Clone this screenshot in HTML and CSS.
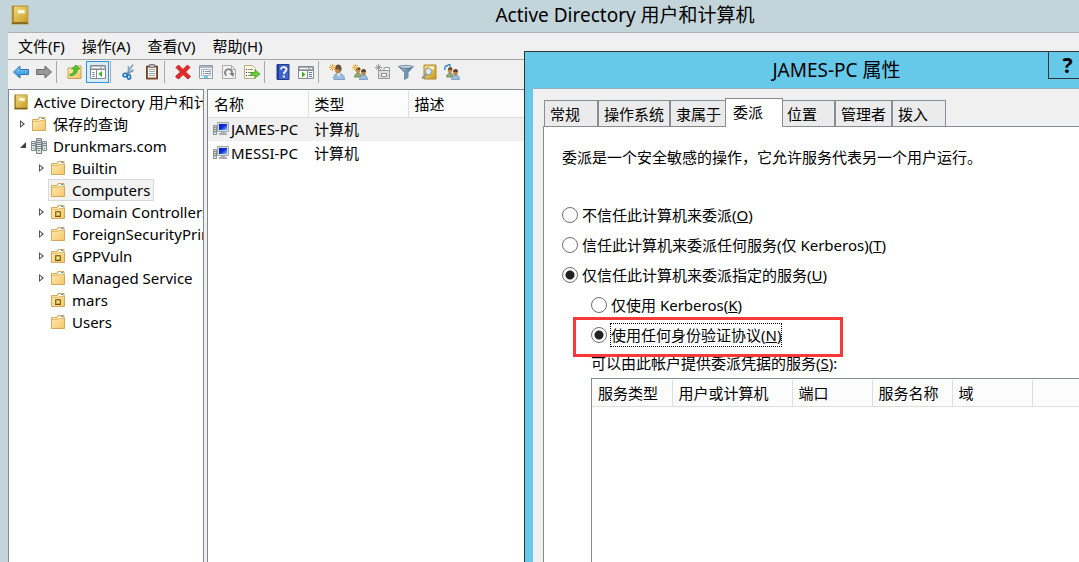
FILE: index.html
```
<!DOCTYPE html>
<html lang="zh-CN">

<head>
  <meta charset="UTF-8">
  <title>Active Directory 用户和计算机</title>
  <link rel="stylesheet" href="styles.css">
</head>

<body>
  <svg class="sprite" aria-hidden="true">
    <defs>
      <linearGradient id="gold" x1="0" y1="0" x2="1" y2="1">
        <stop offset="0" stop-color="#f3dc86" />
        <stop offset="1" stop-color="#c79a1c" />
      </linearGradient>
      <linearGradient id="paper" x1="0" y1="0" x2="1" y2="1">
        <stop offset="0" stop-color="#ffeebb" />
        <stop offset="1" stop-color="#f2c666" />
      </linearGradient>
      <linearGradient id="screen" x1="0" y1="0" x2="1" y2="1">
        <stop offset="0" stop-color="#0a1cc0" />
        <stop offset="0.5" stop-color="#1230d8" />
        <stop offset="1" stop-color="#9cc8ff" />
      </linearGradient>
      <linearGradient id="blueArrow" x1="0" y1="0" x2="0" y2="1">
        <stop offset="0" stop-color="#8fd4f8" />
        <stop offset="1" stop-color="#1b86cf" />
      </linearGradient>
      <linearGradient id="funnel" x1="0" y1="0" x2="1" y2="0">
        <stop offset="0" stop-color="#a9c3d8" />
        <stop offset="1" stop-color="#47698a" />
      </linearGradient>
    </defs>
    <symbol id="book" viewBox="0 0 16 18">
      <path d="M1 1h14v16H1z" fill="url(#gold)" stroke="#b89a3c" />
      <path d="M1 1h1.500v16H1z" fill="#a9872f" />
      <path d="M1 15.500h14V17H1z" fill="#7a6120" />
      <path d="M5.500 4h7v4h-7z" fill="#fffbe6" stroke="#e3c968" />
    </symbol>
    <symbol id="folder" viewBox="0 0 16 16">
      <path d="M1.500 3.500H7l1-2h6v3h.5v10h-13z" fill="url(#paper)" stroke="#cfa95c" />
      <path d="M9 2h4v2H9z" fill="#fff" />
      <path d="M11 2h2v1h-2z" fill="#2d9be8" />
      <path d="M2 5.500h6l1-1h5" fill="none" stroke="#e3bd6c" />
    </symbol>
    <symbol id="unit" viewBox="0 0 16 16">
      <use href="#folder" />
      <path d="M5.500 7.500h5v5h-5z" fill="#c9a944" stroke="#8a7024" />
      <path d="M7 9h2v2H7z" fill="#fff3b0" />
      <path d="M5 12h6v1H5z" fill="#6d5818" />
    </symbol>
    <symbol id="domain" viewBox="0 0 16 16">
      <path d="M5.500 0.500h5v9h-5z" fill="#c9ced1" stroke="#858e93" />
      <path d="M0.500 3.500h4v9h-4zM11.500 3.500h4v9h-4z" fill="#dde1e3" stroke="#858e93" />
      <path d="M5.500 6.500h5v9h-5z" fill="#e2e6e8" stroke="#747d82" />
      <path d="M6 2.500h4M6 4.500h4M1 5.500h3M1 7.500h3M12 5.500h3M12 7.500h3M6 8.500h4M6 10.500h4" stroke="#7d868b" />
      <path d="M2 10h1v1H2zM13 10h1v1h-1zM7 12h2v1H7z" fill="#25a83c" />
    </symbol>
    <symbol id="computer" viewBox="0 0 16 16">
      <path d="M0.500 4.500h3v9h-3z" fill="#d3d6d9" stroke="#8a9094" />
      <path d="M1 6.500h2M1 8.500h2" stroke="#8a9094" />
      <path d="M1 10h2v1H1z" fill="#39b54a" />
      <path d="M4.500 1.500h11v9h-11z" fill="#d7dce2" stroke="#9fa8b0" />
      <path d="M6 3h8v6H6z" fill="url(#screen)" />
      <path d="M8 11h4v1h2v2H6v-2h2z" fill="#a7adb2" />
    </symbol>
    <symbol id="back" viewBox="0 0 16 16">
      <path d="M0.500 8L7 2v3.500h8.500v5H7V14z" fill="url(#blueArrow)" stroke="#2a78b4" stroke-linejoin="round" />
    </symbol>
    <symbol id="forward" viewBox="0 0 16 16">
      <path d="M15.500 8L9 2v3.500H0.500v5H9V14z" fill="#999" stroke="#6b6b6b" stroke-linejoin="round" />
    </symbol>
    <symbol id="up" viewBox="0 0 16 16">
      <path d="M1 4h6l1-2h6v12.500H1z" fill="url(#paper)" stroke="#c8a052" />
      <path d="M3 10c3 0 4-2 4-5H4.500L9 1l4 4h-2.500c0 4-3 7-7.500 7z" fill="#4cc52c" stroke="#2c9416" stroke-width="0.600" />
    </symbol>
    <symbol id="panes" viewBox="0 0 16 16">
      <path d="M0.500 1.500h15v13H0.500z" fill="#fff" stroke="#868b91" />
      <path d="M1 2h14v3H1z" fill="#b7bcc2" />
      <path d="M2 3.500h8M12 3.500h2" stroke="#fff" />
      <path d="M6.500 6v8M1 5.500h14" stroke="#868b91" />
      <path d="M2.500 8.500h2M2.500 10.500h2M2.500 12.500h2" stroke="#5877a8" />
      <path d="M12 7v6l-3.500-3z" fill="#36b31d" />
    </symbol>
    <symbol id="cut" viewBox="0 0 16 16">
      <path d="M6 9.500L12 0.500M7.500 9.500L7.500 2" stroke="#86a3bd" stroke-width="1.600" />
      <path d="M6 10l6.500-4" stroke="#6d96ba" stroke-width="1.500" />
      <ellipse cx="4" cy="11" rx="2" ry="1.800" fill="none" stroke="#1f74bf" stroke-width="1.500" />
      <ellipse cx="8" cy="13" rx="1.600" ry="2.200" fill="none" stroke="#1f74bf" stroke-width="1.500" />
    </symbol>
    <symbol id="paste" viewBox="0 0 16 16">
      <path d="M2.500 2h11v13h-11z" fill="#8a5631" stroke="#734725" />
      <path d="M4 3.500h8v10H4z" fill="#fff" />
      <path d="M5.500 0.500h5v3h-5z" fill="#b8babd" stroke="#77797c" />
      <path d="M5 5.500h6M5 7.500h6M5 9.500h6M5 11.500h6" stroke="#9aa6b4" />
    </symbol>
    <symbol id="delete" viewBox="0 0 16 16">
      <path d="M3.500 1L8 5.500 12.500 1 15 3.500 10.500 8 15.500 12.500 13 15 8 10.500 3.500 15 0.500 12.500 5.500 8 1 3.500z" fill="#e3282b" stroke="#c8282b" stroke-linejoin="round" />
    </symbol>
    <symbol id="props" viewBox="0 0 16 16">
      <path d="M1.500 1.500h13v13h-13z" fill="#f5f7fa" stroke="#9298a0" />
      <path d="M2 3h12" stroke="#aeb5bf" stroke-width="2" />
      <path d="M3.500 5.500h9v6h-9z" fill="#fff" stroke="#adb4be" />
      <path d="M5 7.500h1M5 9.500h1" stroke="#2b7fd2" />
      <path d="M7 7.500h5M7 9.500h5" stroke="#7e93b2" />
      <path d="M6 13h4" stroke="#31c3f2" stroke-width="1.500" />
    </symbol>
    <symbol id="refresh" viewBox="0 0 16 16">
      <path d="M1.500 1.500h9l4 4v9h-13z" fill="#f2f2f2" stroke="#ababab" />
      <path d="M10.500 1.500v4h4" fill="none" stroke="#ababab" />
      <path d="M5.500 11.500A3.500 3.500 0 1 1 11 9" fill="none" stroke="#858585" stroke-width="1.800" />
      <path d="M8 9h5.500L12 13z" fill="#858585" />
    </symbol>
    <symbol id="export" viewBox="0 0 16 16">
      <path d="M0.500 1.500h8l3 3v10h-11z" fill="#fffbe3" stroke="#b5ae8c" />
      <path d="M2 5.500h1M2 8.500h1M2 11.500h1" stroke="#333" />
      <path d="M4 5.500h5M4 8.500h4M4 11.500h4" stroke="#8b87a0" />
      <path d="M7 8.500h4V6l5 4-5 4v-2.500H7z" fill="#6bcf3a" stroke="#3b9a19" stroke-width="0.800" />
    </symbol>
    <symbol id="help" viewBox="0 0 16 16">
      <path d="M2 0.500h12v15H2z" fill="#3f63cc" stroke="#203a8c" />
      <path d="M2 1h2v14H2z" fill="#1f3a96" />
      <path d="M6 5.500c0-3.500 5.500-3 5.500 0 0 2-2.700 2-2.700 4.500" fill="none" stroke="#fff" stroke-width="1.800" />
      <path d="M7.800 11.500h2v2h-2z" fill="#fff" />
    </symbol>
    <symbol id="console" viewBox="0 0 16 16">
      <path d="M0.500 2.500h15v12H0.500z" fill="#fff" stroke="#868b91" />
      <path d="M1 3h14v3H1z" fill="#a9aeb4" />
      <path d="M2 4.500h8M12 4.500h2" stroke="#fff" />
      <path d="M9.500 6v8M1 6.500h14" stroke="#868b91" />
      <path d="M11 8.500h3M11 10.500h3M11 12.500h3" stroke="#5877a8" />
      <path d="M4 7.500v6L7.500 10.500z" fill="#36b31d" />
    </symbol>
    <symbol id="spark" viewBox="0 0 16 16">
      <path d="M3.500 0v7M0 3.500h7M1 1l5 5M6 1L1 6" stroke="#f0a030" />
      <path d="M2.500 2.500h2v2h-2z" fill="#ffe08a" />
    </symbol>
    <symbol id="user" viewBox="0 0 16 16">
      <path d="M5 15.500c-1-4 1-6 4-6s6.500 1 6.500 6z" fill="#9dbde2" stroke="#6f92bb" stroke-width="0.800" />
      <path d="M8 9h3l-1 4z" fill="#fff" />
      <ellipse cx="9" cy="5.500" rx="3" ry="4" fill="#b98249" />
      <path d="M6 5c0-6 7.500-6 6.500 1l-1 2c0-3-2-3-5.500-3z" fill="#6b5236" />
    </symbol>
    <symbol id="users" viewBox="0 0 16 16">
      <path d="M2.500 13c0-5 7-5 7 0z" fill="#8fae78" stroke="#65834f" stroke-width="0.800" />
      <ellipse cx="6" cy="6.500" rx="2.200" ry="2.800" fill="#c18c50" />
      <path d="M4 6c0-4 5-4 4.500 0z" fill="#6b4a26" />
      <path d="M7.500 15.500c0-6 8-6 8 0z" fill="#9dbde2" stroke="#6f92bb" stroke-width="0.800" />
      <ellipse cx="11.500" cy="8.500" rx="2.300" ry="2.900" fill="#b98249" />
      <path d="M9 8c0-4 5.500-4 5 0z" fill="#5d452c" />
    </symbol>
    <symbol id="newobj" viewBox="0 0 16 16">
      <path d="M3.500 6.500h11v8h-11z" fill="#dcdcdc" stroke="#9a9a9a" />
      <path d="M9 3.500h5.500v3H9z" fill="#f6f6f6" stroke="#9a9a9a" />
      <path d="M6.500 9.500h5v3h-5z" fill="#fff" stroke="#8d8d8d" />
      <path d="M3.500 0v7M0 3.500h7M1 1l5 5M6 1L1 6" stroke="#999" />
    </symbol>
    <symbol id="filter" viewBox="0 0 16 16">
      <path d="M0.500 2.500h15L10 8.500v5L6.500 15.500v-7z" fill="url(#funnel)" stroke="#6f8ca5" />
      <ellipse cx="8" cy="2.800" rx="7" ry="1.400" fill="#c7dae8" stroke="#587892" stroke-width="0.800" />
    </symbol>
    <symbol id="find" viewBox="0 0 16 16">
      <path d="M3 1h12v14H3z" fill="url(#gold)" stroke="#a98a2a" />
      <path d="M8 2.500h5v3H8z" fill="#fff6cd" />
      <path d="M5.500 10L1 14.500" stroke="#8c9297" stroke-width="2" />
      <circle cx="7.500" cy="7.500" r="3.200" fill="#d7ecf7" stroke="#8c9297" />
    </symbol>
    <symbol id="member" viewBox="0 0 16 16">
      <use href="#users" />
      <path d="M0.700 6C0.500 3 1.500 1.500 4 1.500" fill="none" stroke="#2c84c8" stroke-width="1.400" />
      <path d="M3.500 0h3v4z" fill="#2c84c8" />
    </symbol>
  </svg>

  <main class="window">
    <header class="titlebar">
      <svg class="app-icon"><use href="#book" /></svg>
      <h1>Active Directory 用户和计算机</h1>
    </header>

    <div class="frame">
      <nav class="menu">
        <button type="button">文件(F)</button>
        <button type="button">操作(A)</button>
        <button type="button">查看(V)</button>
        <button type="button">帮助(H)</button>
      </nav>

      <div class="toolbar">
        <button type="button" aria-label="后退"><svg><use href="#back" /></svg></button>
        <button type="button" aria-label="前进"><svg><use href="#forward" /></svg></button>
        <span class="separator"></span>
        <button type="button" aria-label="向上"><svg><use href="#up" /></svg></button>
        <button type="button" class="pressed" aria-label="控制台树"><svg><use href="#panes" /></svg></button>
        <span class="separator"></span>
        <button type="button" aria-label="剪切"><svg><use href="#cut" /></svg></button>
        <button type="button" aria-label="粘贴"><svg><use href="#paste" /></svg></button>
        <span class="separator"></span>
        <button type="button" aria-label="删除"><svg><use href="#delete" /></svg></button>
        <button type="button" aria-label="属性"><svg><use href="#props" /></svg></button>
        <button type="button" aria-label="刷新"><svg><use href="#refresh" /></svg></button>
        <button type="button" aria-label="导出列表"><svg><use href="#export" /></svg></button>
        <span class="separator"></span>
        <button type="button" aria-label="帮助"><svg><use href="#help" /></svg></button>
        <button type="button" aria-label="操作窗格"><svg><use href="#console" /></svg></button>
        <span class="separator"></span>
        <button type="button" aria-label="新建用户"><svg><use href="#user" /><use href="#spark" /></svg></button>
        <button type="button" aria-label="新建组"><svg><use href="#users" /><use href="#spark" /></svg></button>
        <button type="button" aria-label="新建组织单位"><svg><use href="#newobj" /></svg></button>
        <button type="button" aria-label="筛选"><svg><use href="#filter" /></svg></button>
        <button type="button" aria-label="查找"><svg><use href="#find" /></svg></button>
        <button type="button" aria-label="添加到组"><svg><use href="#member" /></svg></button>
      </div>

      <div class="panes">
        <ul class="tree">
          <li class="root"><svg class="icon"><use href="#book" /></svg><span>Active Directory 用户和计算机</span></li>
          <li class="level1"><i class="arrow closed"></i><svg class="icon"><use href="#folder" /></svg><span>保存的查询</span></li>
          <li class="level1"><i class="arrow open"></i><svg class="icon"><use href="#domain" /></svg><span>Drunkmars.com</span></li>
          <li class="level2"><i class="arrow closed"></i><svg class="icon"><use href="#folder" /></svg><span>Builtin</span></li>
          <li class="level2"><i class="arrow"></i><div class="selected"><svg class="icon"><use href="#folder" /></svg><span>Computers</span></div></li>
          <li class="level2"><i class="arrow closed"></i><svg class="icon"><use href="#unit" /></svg><span>Domain Controllers</span></li>
          <li class="level2"><i class="arrow closed"></i><svg class="icon"><use href="#folder" /></svg><span>ForeignSecurityPrincipals</span></li>
          <li class="level2"><i class="arrow closed"></i><svg class="icon"><use href="#unit" /></svg><span>GPPVuln</span></li>
          <li class="level2"><i class="arrow closed"></i><svg class="icon"><use href="#folder" /></svg><span>Managed Service</span></li>
          <li class="level2"><i class="arrow"></i><svg class="icon"><use href="#unit" /></svg><span>mars</span></li>
          <li class="level2"><i class="arrow"></i><svg class="icon"><use href="#folder" /></svg><span>Users</span></li>
        </ul>

        <div class="list">
          <table class="objects">
            <thead>
              <tr>
                <th class="name">名称</th>
                <th class="type">类型</th>
                <th>描述</th>
              </tr>
            </thead>
            <tbody>
              <tr class="current">
                <td><div class="object"><svg class="icon"><use href="#computer" /></svg><span>JAMES-PC</span></div></td>
                <td>计算机</td>
                <td></td>
              </tr>
              <tr>
                <td><div class="object"><svg class="icon"><use href="#computer" /></svg><span>MESSI-PC</span></div></td>
                <td>计算机</td>
                <td></td>
              </tr>
            </tbody>
          </table>
        </div>
      </div>
    </div>
  </main>

  <section class="dialog">
    <header class="dialog-title">
      <h2>JAMES-PC 属性</h2>
      <button type="button" class="help">?</button>
    </header>

    <div class="dialog-body">
      <div class="tabs">
        <button type="button">常规</button>
        <button type="button">操作系统</button>
        <button type="button">隶属于</button>
        <button type="button" class="active">委派</button>
        <button type="button">位置</button>
        <button type="button">管理者</button>
        <button type="button">拨入</button>
      </div>

      <form class="panel">
        <p>委派是一个安全敏感的操作，它允许服务代表另一个用户运行。</p>

        <div class="option">
          <input type="radio" id="noTrust" name="trust">
          <label for="noTrust">不信任此计算机来委派(<u>O</u>)</label>
        </div>
        <div class="option">
          <input type="radio" id="anyService" name="trust">
          <label for="anyService">信任此计算机来委派任何服务(仅 Kerberos)(<u>T</u>)</label>
        </div>
        <div class="option">
          <input type="radio" id="someServices" name="trust" checked>
          <label for="someServices">仅信任此计算机来委派指定的服务(<u>U</u>)</label>
        </div>

        <div class="nested">
          <div class="option">
            <input type="radio" id="kerberosOnly" name="protocol">
            <label for="kerberosOnly">仅使用 Kerberos(<u>K</u>)</label>
          </div>
          <div class="option marked">
            <input type="radio" id="anyProtocol" name="protocol" checked>
            <label for="anyProtocol" class="focused">使用任何身份验证协议(<u>N</u>)</label>
          </div>

          <div class="caption">可以由此帐户提供委派凭据的服务(<u>S</u>):</div>
          <div class="services">
            <table>
              <thead>
                <tr>
                  <th class="narrow">服务类型</th>
                  <th class="wide">用户或计算机</th>
                  <th class="narrow">端口</th>
                  <th class="narrow">服务名称</th>
                  <th class="narrow">域</th>
                  <th></th>
                </tr>
              </thead>
            </table>
          </div>
        </div>
      </form>
    </div>
  </section>
</body>

</html>
```
FILE: styles.css
```
*,
*:before,
*:after {
  box-sizing: border-box;
}

body {
  margin: 0;
  height: 100vh;
  overflow: hidden;
  position: relative;
  background: #c3d5db;
  color: #000;
  font-family: "Noto Sans", "Noto Sans CJK SC", sans-serif;
  font-size: 15px;
  line-height: 22px;
}

button {
  padding: 0;
  border: none;
  background: none;
  color: inherit;
  font: inherit;
}

h1,
h2 {
  margin: 0;
  font-size: 19px;
  font-weight: normal;
  line-height: 28px;
}

table {
  width: 100%;
  border-collapse: collapse;
  table-layout: fixed;
}

th,
td {
  padding: 0 0 0 6px;
  text-align: left;
  font-weight: normal;
}

th {
  height: 26px;
  border-right: 1px solid #dedede;
  border-bottom: 1px solid #dedede;
  background: #fcfcfc;
}

th:last-child {
  border-right: none;
}

.sprite {
  position: absolute;
  width: 0;
  height: 0;
}

.icon {
  flex: none;
  width: 16px;
  height: 16px;
}

/* main window */
.window {
  display: flex;
  flex-direction: column;
  height: 100%;
  padding-left: 8px;
}

.titlebar {
  display: flex;
  align-items: center;
  height: 32px;
  padding: 0 0 3px 3px;
}

.titlebar h1 {
  flex: 1;
  padding-left: 142px;
  text-align: center;
}

.app-icon {
  width: 18px;
  height: 20px;
}

.frame {
  flex: 1;
  display: flex;
  flex-direction: column;
  min-height: 0;
  border-top: 1px solid #a9b4b9;
  background: #f0f0f0;
}

.menu {
  display: flex;
  gap: 17px;
  height: 27px;
  padding-left: 10px;
  border-bottom: 1px solid #a5a5a8;
}

.toolbar {
  display: flex;
  align-items: center;
  height: 29px;
  padding: 0 0 6px 1px;
}

.toolbar button {
  display: grid;
  place-items: center;
  width: 23px;
  height: 22px;
}

.toolbar .pressed {
  border: 1px solid #2c98dc;
  background: #d9ebf9;
}

.toolbar svg {
  width: 16px;
  height: 16px;
}

.separator {
  width: 1px;
  height: 22px;
  margin: 0 6px 0 1px;
  background: #a8a8a8;
}

.panes {
  flex: 1;
  display: flex;
  gap: 3px;
  min-height: 0;
}

.tree {
  width: 196px;
  margin: 0;
  padding: 1px 0 0 4px;
  overflow: hidden;
  border: 1px solid #828790;
  border-bottom: none;
  background: #fff;
  list-style: none;
}

.tree li,
.selected {
  display: flex;
  align-items: center;
  height: 22px;
  white-space: nowrap;
}

.tree span {
  min-width: 0;
  overflow: hidden;
}

.tree .icon {
  margin-right: 6px;
}

.tree .root .icon {
  margin-right: 5px;
}

.level1 {
  padding-left: 7px;
}

.level2 {
  padding-left: 26px;
}

.selected {
  margin-left: -2px;
  padding: 0 3px 0 1px;
  border: 1px solid #d9d9d9;
  background: #f2f2f2;
}

.arrow {
  flex: none;
  width: 11px;
  height: 8px;
}

.closed:before {
  content: "";
  display: block;
  width: 5px;
  height: 8px;
  background: #555;
  clip-path: polygon(0 0, 100% 50%, 0 100%, 0 0, 1px 2px, 1px 6px, 3px 4px, 1px 2px);
}

.open:before {
  content: "";
  display: block;
  width: 6px;
  height: 6px;
  background: #404040;
  clip-path: polygon(100% 0, 100% 100%, 0 100%);
}

.list {
  flex: 1;
  border-top: 1px solid #828790;
  border-left: 1px solid #828790;
  padding: 1px 0 0;
  background: #fff;
}

.objects .name,
.objects .type {
  width: 100px;
}

.objects td {
  height: 24px;
}

.objects td:first-child {
  padding-left: 5px;
}

.object {
  display: flex;
  align-items: center;
  gap: 2px;
}

.current {
  background: #f0f0f0;
}

/* property sheet */
.dialog {
  position: absolute;
  top: 51px;
  right: 0;
  bottom: 0;
  left: 524px;
  display: flex;
  flex-direction: column;
  padding-left: 8px;
  border-top: 1px solid #333;
  border-left: 1px solid #333;
  background: #66c9ea;
}

.dialog-title {
  display: flex;
  height: 36px;
}

.dialog-title h2 {
  flex: 1;
  padding: 4px 0 0 92px;
  text-align: center;
}

.dialog-title .help {
  width: 31px;
  height: 27px;
  padding-left: 7px;
  border: 1px solid #333;
  border-top: none;
  border-right: none;
  font-size: 21px;
  font-weight: bold;
}

.dialog-body {
  flex: 1;
  display: flex;
  flex-direction: column;
  min-height: 0;
  padding: 9px 0 0 10px;
  border-top: 1px solid #8fb3c4;
  background: #f0f0f0;
}

.tabs {
  display: flex;
  align-items: flex-end;
  padding-left: 1px;
}

.tabs button {
  min-width: 54px;
  height: 26px;
  padding: 0 5px;
  border: 1px solid #898c95;
  border-bottom: none;
  background: #ebebeb;
  text-align: left;
}

.tabs .active {
  min-width: 58px;
  height: 29px;
  margin: 0 -2px -1px;
  padding: 0 7px 3px;
  z-index: 1;
  background: #fff;
}

.panel {
  flex: 1;
  display: flex;
  flex-direction: column;
  min-height: 0;
  padding: 19px 0 0 18px;
  border-top: 1px solid #898c95;
  border-left: 1px solid #898c95;
  background: #fff;
}

.panel p {
  margin: 0 0 32px;
}

.option {
  display: flex;
  align-items: center;
  gap: 4px;
  height: 30px;
}

.option input {
  appearance: none;
  width: 16px;
  height: 16px;
  margin: 0;
  border: 1px solid #707070;
  border-radius: 50%;
  background: #fff;
}

.option input:checked {
  background: radial-gradient(circle, #222 4px, #fff 5px);
}

.nested {
  flex: 1;
  display: flex;
  flex-direction: column;
  padding-left: 29px;
}

.focused {
  outline: 1px dotted #000;
}

.marked {
  position: relative;
}

.marked:after {
  content: "";
  position: absolute;
  top: -3px;
  left: -18px;
  width: 270px;
  height: 40px;
  border: 3px solid #fa3838;
}

.caption {
  height: 28px;
  padding-top: 2px;
}

.services {
  flex: 1;
  padding: 1px 0 0;
  border-top: 1px solid #828790;
  border-left: 1px solid #828790;
}

.services .narrow {
  width: 80px;
}

.services .wide {
  width: 120px;
}
```
